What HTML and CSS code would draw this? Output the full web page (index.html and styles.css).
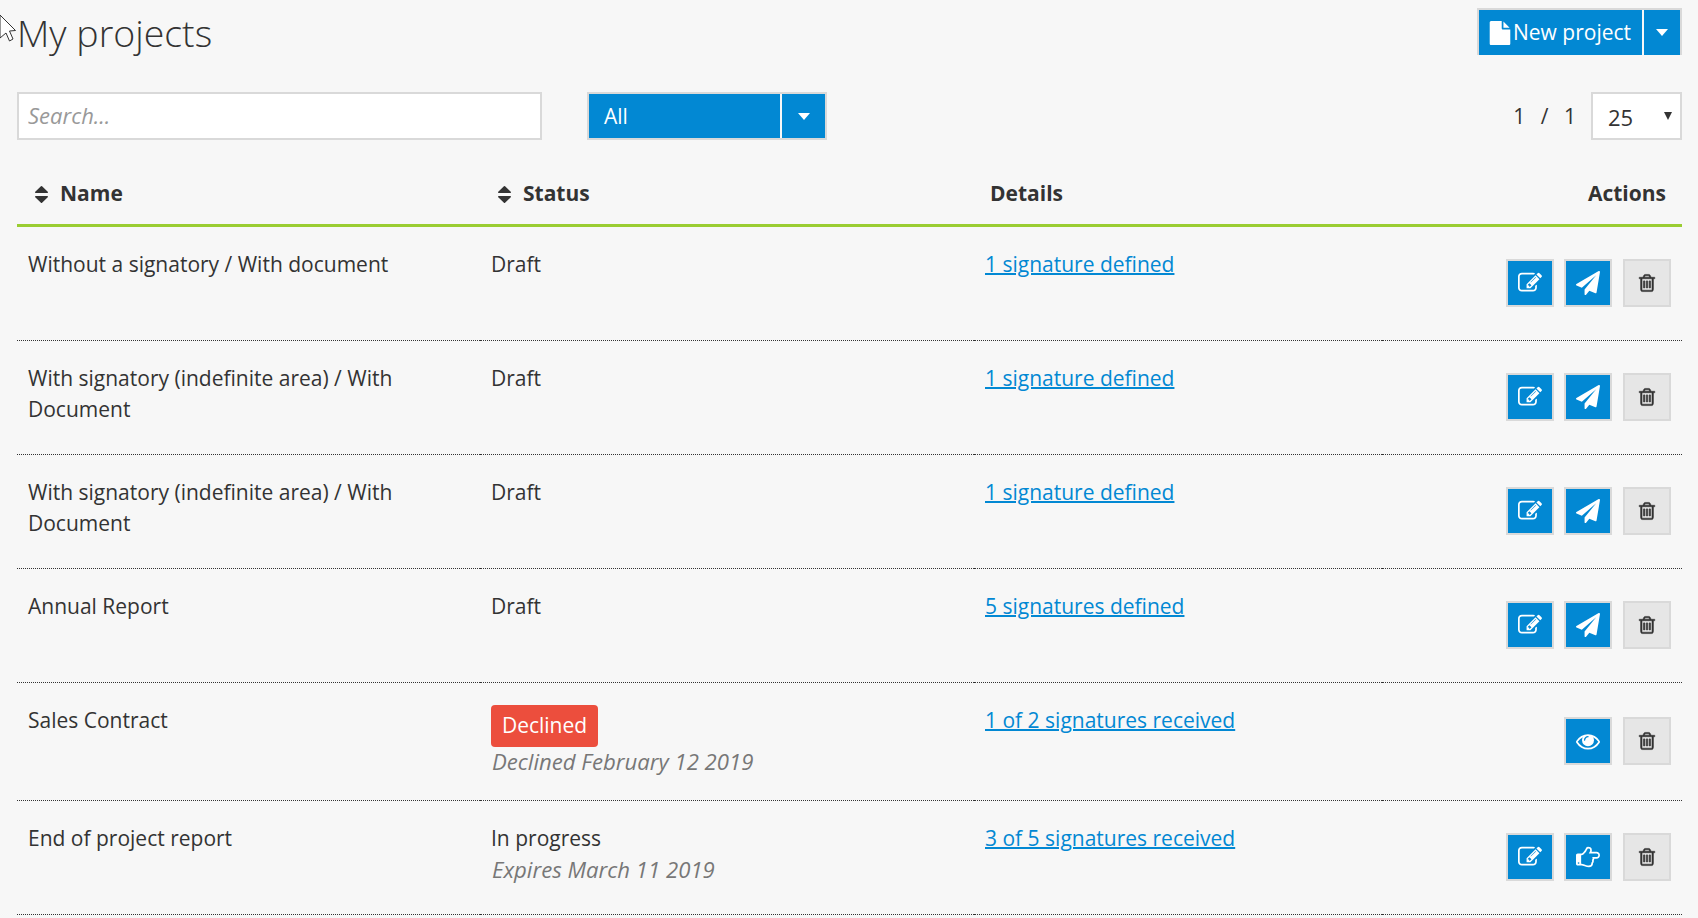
FILE: index.html
```html
<!DOCTYPE html>
<html lang="en">
<head>
    <meta charset="UTF-8">
    <meta name="viewport" content="width=device-width, initial-scale=1.0">
    <title>My projects</title>
    <link rel="stylesheet" href="styles.css">
</head>
<body>

    <svg class="icon-defs" aria-hidden="true">
        <symbol id="i-file" viewBox="0 0 1792 1792"><path d="M1152 512v-472q22 14 36 28l408 408q14 14 28 36h-472zm-128 32q0 40 28 68t68 28h544v1056q0 40-28 68t-68 28h-1344q-40 0-68-28t-28-68v-1600q0-40 28-68t68-28h800v544z"/></symbol>
        <symbol id="i-edit" viewBox="0 0 1792 1792"><path d="M888 1184l116-116-152-152-116 116v56h96v96h56zm440-720q-16-16-33 1l-350 350q-17 17-1 33t33-1l350-350q17-17 1-33zm80 594v190q0 119-84.5 203.5t-203.5 84.5h-832q-119 0-203.5-84.5t-84.5-203.5v-832q0-119 84.5-203.5t203.5-84.5h832q63 0 117 25 15 7 18 23 3 17-9 29l-49 49q-14 14-32 8-23-6-45-6h-832q-66 0-113 47t-47 113v832q0 66 47 113t113 47h832q66 0 113-47t47-113v-126q0-13 9-22l64-64q15-15 35-7t20 29zm-96-738l288 288-672 672h-288v-288zm444 132l-92 92-288-288 92-92q28-28 68-28t68 28l152 152q28 28 28 68t-28 68z"/></symbol>
        <symbol id="i-send" viewBox="0 0 1792 1792"><path d="M1764 11q33 24 27 64l-256 1536q-5 29-32 45-14 8-31 8-11 0-24-5l-453-185-242 295q-18 23-49 23-13 0-22-4-19-7-30.5-23.5t-11.5-36.5v-349l864-1059-1069 925-395-162q-37-14-40-55-2-40 32-59l1664-960q15-9 32-9 20 0 36 11z"/></symbol>
        <symbol id="i-trash" viewBox="0 0 1792 1792"><path d="M704 736v576q0 14-9 23t-23 9h-64q-14 0-23-9t-9-23v-576q0-14 9-23t23-9h64q14 0 23 9t9 23zm256 0v576q0 14-9 23t-23 9h-64q-14 0-23-9t-9-23v-576q0-14 9-23t23-9h64q14 0 23 9t9 23zm256 0v576q0 14-9 23t-23 9h-64q-14 0-23-9t-9-23v-576q0-14 9-23t23-9h64q14 0 23 9t9 23zm128 724v-948h-896v948q0 22 7 40.5t14.5 27 10.5 8.5h832q3 0 10.5-8.5t14.5-27 7-40.5zm-672-1076h448l-48-117q-7-9-17-11h-317q-10 2-17 11zm928 32v64q0 14-9 23t-23 9h-96v948q0 83-47 143.5t-113 60.5h-832q-66 0-113-58.5t-47-141.5v-952h-96q-14 0-23-9t-9-23v-64q0-14 9-23t23-9h309l70-167q15-37 54-63t79-26h320q40 0 79 26t54 63l70 167h309q14 0 23 9t9 23z"/></symbol>
        <symbol id="i-eye" viewBox="0 0 1792 1792"><path d="M1664 960q-152-236-381-353 61 104 61 225 0 185-131.5 316.5t-316.5 131.5-316.5-131.5-131.5-316.5q0-121 61-225-229 117-381 353 133 205 333.5 326.5t434.5 121.5 434.5-121.5 333.5-326.5zm-720-384q0-20-14-34t-34-14q-125 0-214.5 89.5t-89.5 214.5q0 20 14 34t34 14 34-14 14-34q0-86 61-147t147-61q20 0 34-14t14-34zm848 384q0 34-20 69-140 230-376.5 368.5t-499.5 138.5-499.5-139-376.5-368q-20-35-20-69t20-69q140-229 376.5-368t499.5-139 499.5 139 376.5 368q20 35 20 69z"/></symbol>
        <symbol id="i-hand" viewBox="0 0 1792 1792"><path d="M256 1344q0-26-19-45t-45-19-45 19-19 45 19 45 45 19 45-19 19-45zm1408-576q0-51-39-89.5t-89-38.5h-576q0-20 15-48.5t33-55 33-68 15-84.5q0-67-44.5-97.5t-115.5-30.5q-24 0-90 139-24 44-37 65-40 64-112 145-71 81-101 106-69 57-140 57h-32v640h32q72 0 167 32t193.5 64 179.5 32q189 0 189-167 0-26-5-56 30-16 47.5-52.5t17.5-73.5-18-69q53-50 53-119 0-25-10-55.5t-25-47.5h331q52 0 90-38t38-90zm128-1q0 105-75.5 181t-180.5 76h-169q-4 62-37 119 3 21 3 43 0 101-60 178 1 139-85 219.5t-227 80.5q-133 0-322-69-164-59-223-59h-288q-53 0-90.5-37.5t-37.5-90.5v-640q0-53 37.5-90.5t90.5-37.5h288q10 0 21.5-4.5t23.5-14 22.5-18 24-22.5 20.5-21.5 19-21.5 14-17q65-74 100-129 13-21 33-62t37-72 40.5-63 55-49.5 69.5-17.5q125 0 206.5 67t81.5 189q0 68-22 128h374q104 0 178 74t74 178z"/></symbol>
        <symbol id="i-sort" viewBox="384 192 1024 1408" preserveAspectRatio="none"><path d="M1408 1088q0 26-19 45l-448 448q-19 19-45 19t-45-19l-448-448q-19-19-19-45t19-45 45-19h896q26 0 45 19t19 45zm0-384q0 26-19 45t-45 19h-896q-26 0-45-19t-19-45 19-45l448-448q19-19 45-19t45 19l448 448q19 19 19 45z"/></symbol>
    </svg>

    <svg class="mouse-cursor" viewBox="0 0 17 28" aria-hidden="true"><path d="M0 0 L15.5 15.5 L9.5 16 L13 24 L9.5 26 L6 18 L0 23 Z" fill="#fff" stroke="#333" stroke-width="1"/></svg>

    <div class="page-head">
        <h1>My projects</h1>
        <div class="split-btn">
            <span class="split-main"><svg class="ico-file"><use href="#i-file"/></svg>New project</span>
            <span class="split-caret"><i class="caret"></i></span>
        </div>
    </div>

    <div class="toolbar">
        <input class="search" type="text" placeholder="Search...">
        <div class="filter">
            <span class="filter-value">All</span>
            <span class="filter-caret"><i class="caret"></i></span>
        </div>
        <div class="pager">1 / 1</div>
        <div class="page-size">25<i class="caret-dark"></i></div>
    </div>

    <table class="projects">
        <thead>
            <tr>
                <th class="col-name"><svg class="ico-sort"><use href="#i-sort"/></svg>Name</th>
                <th class="col-status"><svg class="ico-sort"><use href="#i-sort"/></svg>Status</th>
                <th class="col-details">Details</th>
                <th class="col-actions">Actions</th>
            </tr>
        </thead>
        <tbody>
            <tr>
                <td>Without a signatory / With document</td>
                <td>Draft</td>
                <td><a href="#">1 signature defined</a></td>
                <td class="actions">
                    <div class="btns">
                        <a class="btn" href="#"><svg><use href="#i-edit"/></svg></a>
                        <a class="btn" href="#"><svg><use href="#i-send"/></svg></a>
                        <a class="btn btn-grey" href="#"><svg><use href="#i-trash"/></svg></a>
                    </div>
                </td>
            </tr>
            <tr>
                <td>With signatory (indefinite area) / With Document</td>
                <td>Draft</td>
                <td><a href="#">1 signature defined</a></td>
                <td class="actions">
                    <div class="btns">
                        <a class="btn" href="#"><svg><use href="#i-edit"/></svg></a>
                        <a class="btn" href="#"><svg><use href="#i-send"/></svg></a>
                        <a class="btn btn-grey" href="#"><svg><use href="#i-trash"/></svg></a>
                    </div>
                </td>
            </tr>
            <tr>
                <td>With signatory (indefinite area) / With Document</td>
                <td>Draft</td>
                <td><a href="#">1 signature defined</a></td>
                <td class="actions">
                    <div class="btns">
                        <a class="btn" href="#"><svg><use href="#i-edit"/></svg></a>
                        <a class="btn" href="#"><svg><use href="#i-send"/></svg></a>
                        <a class="btn btn-grey" href="#"><svg><use href="#i-trash"/></svg></a>
                    </div>
                </td>
            </tr>
            <tr>
                <td>Annual Report</td>
                <td>Draft</td>
                <td><a href="#">5 signatures defined</a></td>
                <td class="actions">
                    <div class="btns">
                        <a class="btn" href="#"><svg><use href="#i-edit"/></svg></a>
                        <a class="btn" href="#"><svg><use href="#i-send"/></svg></a>
                        <a class="btn btn-grey" href="#"><svg><use href="#i-trash"/></svg></a>
                    </div>
                </td>
            </tr>
            <tr>
                <td>Sales Contract</td>
                <td>
                    <span class="badge">Declined</span>
                    <div class="note note-first">Declined February 12 2019</div>
                </td>
                <td><a href="#">1 of 2 signatures received</a></td>
                <td class="actions">
                    <div class="btns">
                        <a class="btn" href="#"><svg><use href="#i-eye"/></svg></a>
                        <a class="btn btn-grey" href="#"><svg><use href="#i-trash"/></svg></a>
                    </div>
                </td>
            </tr>
            <tr>
                <td>End of project report</td>
                <td>
                    In progress
                    <div class="note">Expires March 11 2019</div>
                </td>
                <td><a href="#">3 of 5 signatures received</a></td>
                <td class="actions">
                    <div class="btns">
                        <a class="btn" href="#"><svg><use href="#i-edit"/></svg></a>
                        <a class="btn" href="#"><svg><use href="#i-hand"/></svg></a>
                        <a class="btn btn-grey" href="#"><svg><use href="#i-trash"/></svg></a>
                    </div>
                </td>
            </tr>
        </tbody>
    </table>

</body>
</html>
```

FILE: styles.css
```css
* {
    box-sizing: border-box;
}
html, body {
    height: 100%;
}
body {
    margin: 0;
    padding: 8px 16px 0 17px;
    overflow: hidden;
    background-color: #f7f7f7;
    color: #333;
    font-family: "Open Sans", Arial, sans-serif;
    font-size: 21px;
    line-height: 31px;
}
.icon-defs {
    display: none;
}
.mouse-cursor {
    position: absolute;
    left: 0;
    top: 15px;
    width: 17px;
    height: 28px;
}
.page-head {
    display: flex;
    justify-content: space-between;
    align-items: flex-start;
    height: 84px;
}
h1 {
    margin: 3px 0 0;
    font-size: 37.5px;
    font-weight: 300;
    line-height: 44px;
}
.split-btn {
    display: flex;
    height: 47px;
    border: 2px solid #d9d9d9;
    border-bottom: 0;
    color: #fff;
}
.split-main {
    display: flex;
    align-items: center;
    width: 163px;
    padding-left: 9px;
    background-color: #0288d3;
}
.split-caret {
    display: flex;
    align-items: center;
    justify-content: center;
    width: 36px;
    margin-left: 2px;
    background-color: #0288d3;
}
.ico-file {
    width: 24px;
    height: 24px;
    margin-right: 1px;
    fill: #fff;
}
.caret {
    display: block;
    border-top: 7px solid #fff;
    border-left: 6px solid transparent;
    border-right: 6px solid transparent;
}
.toolbar {
    display: flex;
    align-items: stretch;
    height: 48px;
}
.search {
    width: 525px;
    padding: 0 9px 2px;
    border: 2px solid #d9d9d9;
    background-color: #fff;
    color: #333;
    font-family: inherit;
    font-size: 22px;
}
.search::placeholder {
    color: #999;
    font-style: italic;
    opacity: 1;
}
.filter {
    display: flex;
    width: 240px;
    margin-left: 45px;
    border: 2px solid #d9d9d9;
    color: #fff;
}
.filter-value {
    display: flex;
    align-items: center;
    flex: 1;
    padding-left: 15px;
    background-color: #0288d3;
}
.filter-caret {
    display: flex;
    align-items: center;
    justify-content: center;
    width: 43px;
    margin-left: 2px;
    background-color: #0288d3;
}
.pager {
    display: flex;
    align-items: center;
    margin-left: auto;
    margin-right: 15px;
    word-spacing: 10px;
}
.page-size {
    position: relative;
    width: 91px;
    padding: 8px 0 0 15px;
    border: 2px solid #d9d9d9;
    background-color: #fff;
    font-size: 22px;
}
.caret-dark {
    position: absolute;
    top: 18px;
    right: 8px;
    border-top: 8px solid #333;
    border-left: 4.5px solid transparent;
    border-right: 4.5px solid transparent;
}
.projects {
    width: 100%;
    margin-top: 27px;
    border-collapse: separate;
    border-spacing: 0;
    table-layout: fixed;
}
.projects th {
    height: 60px;
    padding: 0 0 4px 16px;
    border-bottom: 3px solid #9acd32;
    font-weight: 700;
    text-align: left;
}
.col-name, .col-status {
    white-space: nowrap;
}
.col-name {
    width: 463px;
}
.col-status {
    width: 494px;
}
.col-actions {
    width: 300px;
}
.projects th.col-actions {
    padding-right: 16px;
    text-align: right;
}
.ico-sort {
    width: 13px;
    height: 17px;
    margin: 0 12px 0 2px;
    vertical-align: -2px;
    fill: #333;
}
.projects td {
    height: 114px;
    padding: 22px 11px;
    border-bottom: 1px dotted #333;
    vertical-align: top;
}
.projects td a {
    color: #0288d3;
    text-decoration-thickness: 2px;
}
.projects td.actions {
    padding: 0 11px 2px;
    vertical-align: middle;
}
.btns {
    display: flex;
    justify-content: flex-end;
    gap: 10px;
}
.btn {
    display: flex;
    align-items: center;
    justify-content: center;
    width: 48px;
    height: 48px;
    border: 2px solid #d9d9d9;
    background-color: #0288d3;
    fill: #fff;
}
.btn svg {
    width: 24px;
    height: 24px;
}
.btn-grey {
    margin-left: 1px;
    background-color: #e6e6e6;
    fill: #333;
    stroke: #333;
    stroke-width: 50;
}
.btn-grey svg {
    width: 20px;
    height: 20px;
}
.badge {
    display: block;
    width: 107px;
    height: 42px;
    line-height: 41px;
    border-radius: 4px;
    background-color: #ec4e3d;
    color: #fff;
    text-align: center;
}
.note {
    padding-left: 1px;
    color: #777;
    font-size: 22.15px;
    font-style: italic;
}
.note-first {
    margin-top: -1px;
    margin-bottom: 1px;
}
```
